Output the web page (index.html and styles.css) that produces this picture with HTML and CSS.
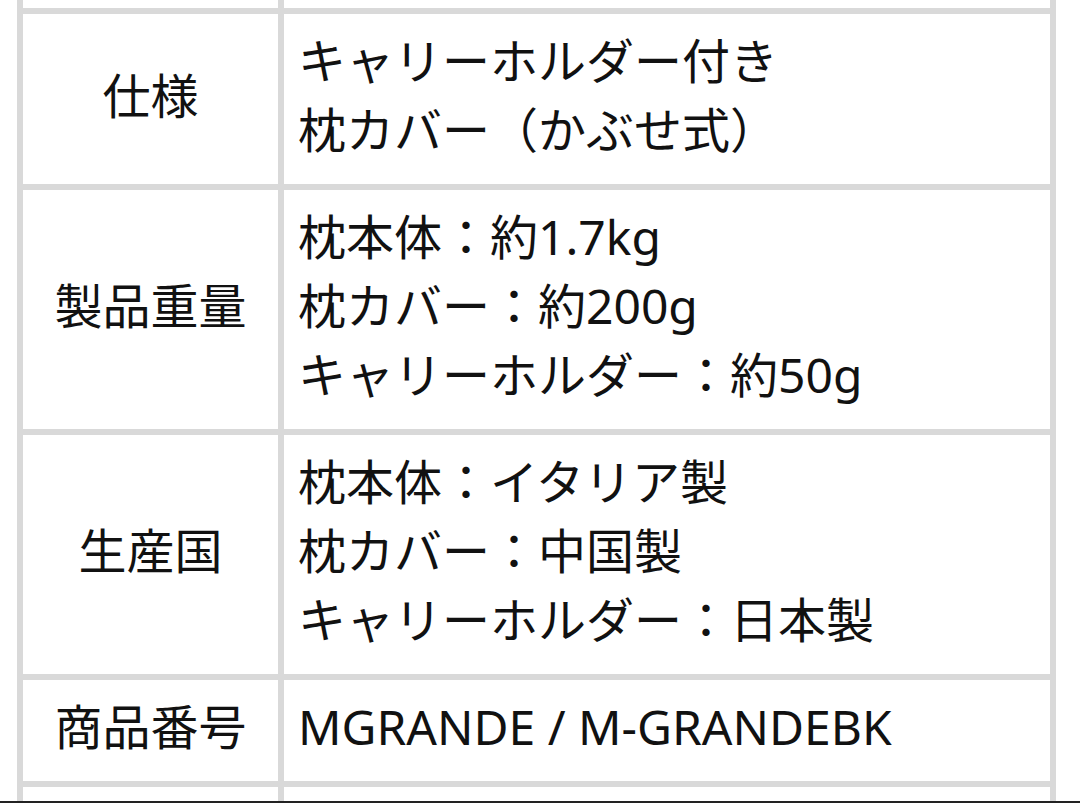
FILE: index.html
```html
<!DOCTYPE html>
<html lang="ja">
<head>
<meta charset="utf-8">
<link rel="stylesheet" href="styles.css">
</head>
<body>
<div class="spec">
  <div class="cell edge-top"></div><div class="cell edge-top"></div>
  <div class="cell label">仕様</div>
  <div class="cell value">キャリーホルダー付き<br>枕カバー（かぶせ式）</div>
  <div class="cell label">製品重量</div>
  <div class="cell value">枕本体：約1.7kg<br>枕カバー：約200g<br>キャリーホルダー：約50g</div>
  <div class="cell label">生産国</div>
  <div class="cell value">枕本体：イタリア製<br>枕カバー：中国製<br>キャリーホルダー：日本製</div>
  <div class="cell label">商品番号</div>
  <div class="cell value">MGRANDE / M-GRANDEBK</div>
  <div class="cell edge-bottom"></div><div class="cell edge-bottom"></div>
</div>
<div class="screen-edge"></div>
</body>
</html>
```

FILE: styles.css
```css
html, body {
  margin: 0;
  padding: 0;
  background: #ffffff;
}
body {
  width: 1080px;
  height: 803px;
  overflow: hidden;
  display: flex;
  flex-direction: column;
  font-family: "Noto Sans", "Noto Sans CJK JP", sans-serif;
  color: #111111;
}
.spec {
  margin-left: 17px;
  width: 1039px;
  display: grid;
  grid-template-columns: 255px 766px;
  grid-template-rows: 8px auto auto auto auto 14px;
  gap: 6px;
  padding: 0 6px;
  background: #d9d9d9;
  box-sizing: border-box;
  flex: none;
}
.cell {
  background: #ffffff;
  font-size: 48px;
  line-height: 69px;
  padding: 12px 0 20px;
}
.edge-top, .edge-bottom {
  padding: 0;
}
.label {
  display: flex;
  align-items: center;
  justify-content: center;
  text-align: center;
}
.value {
  padding-left: 14px;
  white-space: nowrap;
}
.screen-edge {
  height: 2px;
  background: #222222;
  flex: none;
}
```
